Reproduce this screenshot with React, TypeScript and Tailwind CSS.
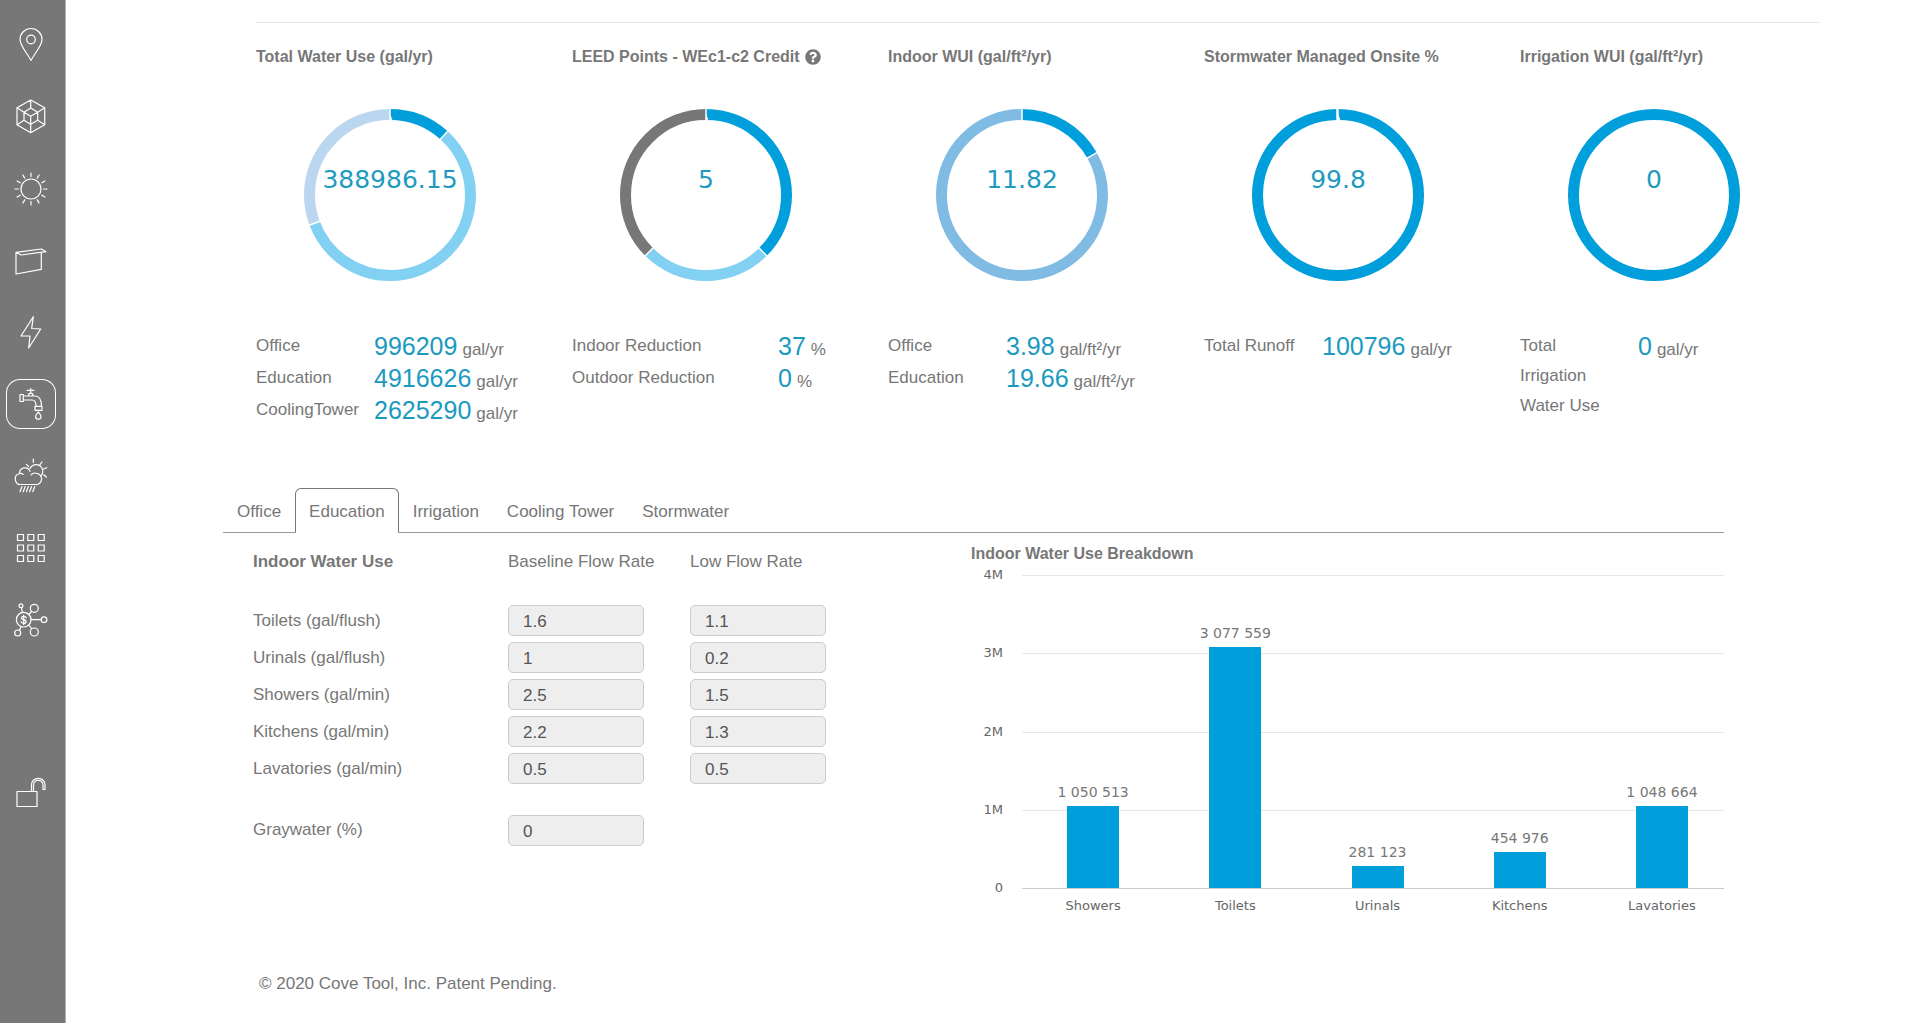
import React, { useState } from "react";
import { FaQuestionCircle } from "react-icons/fa";

type Segment = { share: number; color: string };
type Row = { label: string; value: string; unit: string };
type Metric = {
  title: string;
  help?: boolean;
  total: string;
  segments: Segment[];
  rows: Row[];
  wide?: boolean;
};

const metrics: Metric[] = [
  {
    title: "Total Water Use (gal/yr)",
    total: "388986.15",
    segments: [
      { share: 11.7, color: "#009fdb" },
      { share: 57.6, color: "#82d0f2" },
      { share: 30.7, color: "#bbd7ef" },
    ],
    rows: [
      { label: "Office", value: "996209", unit: "gal/yr" },
      { label: "Education", value: "4916626", unit: "gal/yr" },
      { label: "CoolingTower", value: "2625290", unit: "gal/yr" },
    ],
  },
  {
    title: "LEED Points - WEc1-c2 Credit",
    help: true,
    total: "5",
    wide: true,
    segments: [
      { share: 37.5, color: "#009fdb" },
      { share: 25, color: "#82d0f2" },
      { share: 37.5, color: "#777777" },
    ],
    rows: [
      { label: "Indoor Reduction", value: "37", unit: "%" },
      { label: "Outdoor Reduction", value: "0", unit: "%" },
    ],
  },
  {
    title: "Indoor WUI (gal/ft²/yr)",
    total: "11.82",
    segments: [
      { share: 16.8, color: "#009fdb" },
      { share: 83.2, color: "#80bbe4" },
    ],
    rows: [
      { label: "Office", value: "3.98", unit: "gal/ft²/yr" },
      { label: "Education", value: "19.66", unit: "gal/ft²/yr" },
    ],
  },
  {
    title: "Stormwater Managed Onsite %",
    total: "99.8",
    segments: [
      { share: 99.8, color: "#009fdb" },
      { share: 0.2, color: "#82d0f2" },
    ],
    rows: [{ label: "Total Runoff", value: "100796", unit: "gal/yr" }],
  },
  {
    title: "Irrigation WUI (gal/ft²/yr)",
    total: "0",
    segments: [{ share: 100, color: "#009fdb" }],
    rows: [{ label: "Total Irrigation Water Use", value: "0", unit: "gal/yr" }],
  },
];

const fixtures = [
  { name: "Toilets (gal/flush)", base: "1.6", low: "1.1" },
  { name: "Urinals (gal/flush)", base: "1", low: "0.2" },
  { name: "Showers (gal/min)", base: "2.5", low: "1.5" },
  { name: "Kitchens (gal/min)", base: "2.2", low: "1.3" },
  { name: "Lavatories (gal/min)", base: "0.5", low: "0.5" },
];

const bars = [
  { name: "Showers", value: 1050513, text: "1 050 513" },
  { name: "Toilets", value: 3077559, text: "3 077 559" },
  { name: "Urinals", value: 281123, text: "281 123" },
  { name: "Kitchens", value: 454976, text: "454 976" },
  { name: "Lavatories", value: 1048664, text: "1 048 664" },
];

const rays = Array.from({ length: 12 }, (_, i) => (i * Math.PI) / 6);

const icons: { name: string; art: React.ReactNode }[] = [
  {
    name: "Location",
    art: (
      <>
        <path d="M25 41.5C22.5 36 14 27 14 20.5a11 11 0 0 1 22 0C36 27 27.5 36 25 41.5z" />
        <circle cx="25" cy="20.5" r="4.3" />
      </>
    ),
  },
  {
    name: "Geometry",
    art: (
      <path d="M24.7 9l14 7.7v17l-14 8-13.7-8v-17zM24.7 17l7 4.300v8l-7 4-6.700-4v-8zM24.700 9v8M38.700 16.700l-7 4.600M38.700 33.700l-7-4.400M24.700 41.700V25.300M11 33.700l7-4.400M11 16.700l7 4.600 6.700 4 7-4" />
    ),
  },
  {
    name: "Daylight",
    art: (
      <>
        <circle cx="25" cy="26" r="10" />
        {rays.map((a) => (
          <line
            key={a}
            x1={25 + 12.5 * Math.cos(a)}
            y1={26 + 12.5 * Math.sin(a)}
            x2={25 + 16 * Math.cos(a)}
            y2={26 + 16 * Math.sin(a)}
          />
        ))}
      </>
    ),
  },
  {
    name: "Facade",
    art: <path d="M10 17.3L35.3 14l4.7 2.7L15 20zM10 17.3V39l25.3-4.7v-17" />,
  },
  {
    name: "Energy",
    art: <path d="M27.3 9.7L15 29h9l-1.3 12 12-19-9-.5z" />,
  },
  {
    name: "Water",
    art: (
      <>
        <path d="M14 15.5h3.3v7H14zM17.3 17H29c4 0 6.5 4 6.5 10.3M17.3 21h9c2.4 0 3.7 2.5 3.7 6.3M29 27.3h7v4h-7zM22.500 17c0-2 1-2.800 2.200-2.800s2.300.8 2.300 2.800M24.700 14.200V9.500M21 11.300h7" />
        <path d="M32.300 33c1.200 1.800 2.700 3 2.700 4.600a2.700 2.700 0 0 1-5.400 0c0-1.600 1.500-2.800 2.700-4.600z" />
      </>
    ),
  },
  {
    name: "Climate",
    art: (
      <>
        <path d="M15 33.500h14.500a5.500 5.500 0 0 0 1-11.200c-2-.6-4.200 0-5.500 1.500M15 33.500a5.500 5.500 0 0 1-2-10.700M13 22.800c1.500-.6 3-.3 4.200.6M13.500 22.600c0-7 8.600-7.300 10.500-2.200M24 17.500a6.700 6.700 0 1 1 11.300 7" />
        <path d="M27.300 8v3.500M36 11l-2.200 2.800M40.700 16.700l-3.200 1.300M40.300 26l-2.700-2.200M20.500 13.500l2.200 2.200M16 35.500l-2 5.200M19.200 35.500l-2 5.200M22.400 35.500l-2 5.200M25.600 35.500l-2 5.200M28.800 35.500l-2 5.200" />
      </>
    ),
  },
  {
    name: "Options",
    art: (
      <path d="M11.500 11.500h6v6h-6zM21.800 11.500h6v6h-6zM32.200 11.500h6v6h-6zM11.500 22h6v6h-6zM21.800 22h6v6h-6zM32.200 22h6v6h-6zM11.500 32.500h6v6h-6zM21.800 32.500h6v6h-6zM32.200 32.500h6v6h-6z" />
    ),
  },
  {
    name: "Cost",
    art: (
      <>
        <circle cx="17.7" cy="24.7" r="7.3" />
        <circle cx="15" cy="10.7" r="1.9" />
        <circle cx="28.3" cy="13.3" r="4" />
        <circle cx="38" cy="24.7" r="2.8" />
        <circle cx="28.3" cy="37" r="4" />
        <circle cx="11.7" cy="38" r="3" />
        <path d="M15.5 12.6l.8 4.8M22.8 19.5l2.7-3M25 24.7h10.2M22.8 30l2.7 3.5M13.5 35.5l1.5-3.8" />
        <path d="M20.3 22.8c-.4-1-1.3-1.5-2.5-1.5-3 0-3.2 3-.3 3.400 3.500.4 3.200 3.700.2 3.700-1.400 0-2.400-.6-2.700-1.700M17.700 20v9.500" />
      </>
    ),
  },
];

const lockArt = (
  <path d="M11 24.500h20v15H11zM25.500 24.500v-6.300c0-9.200 13.500-9.200 13.500 0v4.300h-2v-4.300c0-6.500-9.500-6.500-9.500 0v6.300" />
);

function SideButton({
  name,
  active,
  children,
}: {
  name: string;
  active?: boolean;
  children: React.ReactNode;
}) {
  return (
    <button
      type="button"
      aria-label={name}
      className={
        active
          ? "size-[50px] rounded-[14px] shadow-[inset_0_0_0_1px_#ffffff]"
          : "size-[50px] rounded-[14px]"
      }
    >
      <svg
        viewBox="0 0 50 50"
        className="size-[50px] fill-none stroke-white"
        strokeWidth="1.2"
        strokeLinejoin="round"
        strokeLinecap="round"
      >
        {children}
      </svg>
    </button>
  );
}

function Ring({ segments, total }: { segments: Segment[]; total: string }) {
  let start = 0;
  const parts = segments.map((s) => {
    const part = { ...s, start };
    start += s.share;
    return part;
  });
  return (
    <svg viewBox="-87 -87 174 174" className="mt-[39px] ml-[47px] size-[174px]">
      <g transform="rotate(-90)" fill="none" strokeWidth="11">
        {parts.map((p) => (
          <circle
            key={p.start}
            r="80.5"
            pathLength={100}
            stroke={p.color}
            strokeDasharray={p.share === 100 ? undefined : `${p.share} ${100 - p.share}`}
            strokeDashoffset={-p.start}
          />
        ))}
      </g>
      {parts.length > 1 &&
        parts.map((p) => (
          <line
            key={p.start}
            y1="-87"
            y2="-74"
            stroke="#ffffff"
            strokeWidth="1.5"
            transform={`rotate(${p.start * 3.6})`}
          />
        ))}
      <text
        y="-7"
        textAnchor="middle"
        className="fill-[#1f9ac0] font-['DejaVu_Sans',sans-serif] text-[25px]"
      >
        {total}
      </text>
    </svg>
  );
}

function MetricCard({ metric }: { metric: Metric }) {
  return (
    <section>
      <h2 className="flex items-center gap-[5px] text-base leading-6 font-bold whitespace-nowrap">
        {metric.title}
        {metric.help && <FaQuestionCircle className="size-4" aria-label="Help" />}
      </h2>
      <Ring segments={metric.segments} total={metric.total} />
      <dl className="mt-12">
        {metric.rows.map((r) => (
          <div key={r.label} className="flex min-h-8">
            <dt
              className={
                metric.wide
                  ? "-mb-px w-[206px] shrink-0 pt-px leading-[30px]"
                  : "-mb-px w-[118px] shrink-0 pt-px pr-[13px] leading-[30px]"
              }
            >
              {r.label}
            </dt>
            <dd className="flex h-8 items-baseline gap-[5px] leading-8 whitespace-nowrap">
              <span className="text-[25px] text-[#1a9abf]">{r.value}</span>
              <span>{r.unit}</span>
            </dd>
          </div>
        ))}
      </dl>
    </section>
  );
}

function RateInput({ label, value }: { label: string; value: string }) {
  return (
    <input
      type="text"
      aria-label={label}
      defaultValue={value}
      className="block h-[31px] w-[136px] rounded-[5px] border border-[#cccccc] bg-[#eeeeee] px-[14px] pt-0.5 text-[#555555]"
    />
  );
}

function FixtureTable() {
  return (
    <table className="mt-[14px] table-fixed">
      <colgroup>
        <col className="w-[255px]" />
        <col className="w-[182px]" />
        <col className="w-[182px]" />
      </colgroup>
      <thead>
        <tr className="h-[55px] text-left align-top leading-[30px]">
          <th scope="col" className="font-bold">
            Indoor Water Use
          </th>
          <th scope="col" className="font-normal">
            Baseline Flow Rate
          </th>
          <th scope="col" className="font-normal">
            Low Flow Rate
          </th>
        </tr>
      </thead>
      <tbody>
        {fixtures.map((f) => (
          <tr key={f.name} className="h-[37px]">
            <th scope="row" className="text-left font-normal">
              {f.name}
            </th>
            <td>
              <RateInput label={`${f.name} baseline flow rate`} value={f.base} />
            </td>
            <td>
              <RateInput label={`${f.name} low flow rate`} value={f.low} />
            </td>
          </tr>
        ))}
        <tr className="h-[62px] align-bottom">
          <th scope="row" className="pb-[7px] text-left font-normal">
            Graywater (%)
          </th>
          <td className="pb-[3px]">
            <RateInput label="Graywater (%)" value="0" />
          </td>
          <td />
        </tr>
      </tbody>
    </table>
  );
}

function BreakdownChart() {
  return (
    <section className="min-w-0 flex-1 pt-[9px]">
      <h3 className="text-base leading-6 font-bold">Indoor Water Use Breakdown</h3>
      <div className="mt-[9px] flex font-['DejaVu_Sans',sans-serif] text-[13px] text-[#666666]">
        <div className="-my-2.5 flex h-[333px] w-8 flex-col justify-between text-right leading-5">
          {["4M", "3M", "2M", "1M", "0"].map((t) => (
            <span key={t}>{t}</span>
          ))}
        </div>
        <div className="ml-[19px] min-w-0 flex-1">
          <div className="relative h-[314px]">
            <div className="absolute inset-0 flex flex-col justify-between">
              {[4, 3, 2, 1].map((n) => (
                <div key={n} className="h-px bg-[#e6e6e6]" />
              ))}
              <div className="h-px bg-[#cccccc]" />
            </div>
            <div className="relative -mr-[9px] flex h-[313px]">
              {bars.map((b) => (
                <div key={b.name} className="flex flex-1 flex-col items-center justify-end">
                  <span className="pb-1 text-sm leading-5 whitespace-nowrap text-[#777777]">
                    {b.text}
                  </span>
                  <div
                    className="w-[52px] shrink-0 bg-[#009fdb]"
                    style={{ height: `${b.value / 40000}%` }}
                  />
                </div>
              ))}
            </div>
          </div>
          <div className="mt-[7px] -mr-[9px] flex leading-5">
            {bars.map((b) => (
              <span key={b.name} className="flex-1 text-center">
                {b.name}
              </span>
            ))}
          </div>
        </div>
      </div>
    </section>
  );
}

const tabs = ["Office", "Education", "Irrigation", "Cooling Tower", "Stormwater"];

export default function App() {
  const [tab, setTab] = useState("Education");
  return (
    <div className="flex min-h-screen bg-white font-['Liberation_Sans',Arial,sans-serif] text-[17px] text-[#777777]">
      <nav
        aria-label="Main"
        className="flex w-[66px] shrink-0 flex-col gap-[22px] border-r border-[#b0b0b0] bg-[#777777] pt-[19px] pl-1.5"
      >
        {icons.map((i) => (
          <SideButton key={i.name} name={i.name} active={i.name === "Water"}>
            {i.art}
          </SideButton>
        ))}
        <div className="mt-[100px]">
          <SideButton name="Lock project">{lockArt}</SideButton>
        </div>
      </nav>

      <main className="min-w-0 flex-1">
        <div className="pr-[84px] pl-[190px]">
          <hr className="mt-[22px] mr-4 border-[#e8e8e8]" />
          <div className="mt-[22px] grid grid-cols-5">
            {metrics.map((m) => (
              <MetricCard key={m.title} metric={m} />
            ))}
          </div>
        </div>

        <div className="mt-[62px] mr-[196px] ml-[157px]">
          <div role="tablist" className="flex h-[45px] border-b border-[#999999]">
            {tabs.map((t) => (
              <button
                key={t}
                type="button"
                role="tab"
                aria-selected={t === tab}
                onClick={() => setTab(t)}
                className={
                  t === tab
                    ? "-mb-px rounded-t-md border border-[#777777] border-b-white bg-white px-[13px] pt-[3px]"
                    : "border border-transparent px-[13px] pt-1"
                }
              >
                {t}
              </button>
            ))}
          </div>
          <div className="flex">
            <div className="w-[748px] shrink-0 pl-[30px]">
              <FixtureTable />
            </div>
            <BreakdownChart />
          </div>
        </div>

        <footer className="mt-14 pl-[193px] leading-6">
          © 2020 Cove Tool, Inc. Patent Pending.
        </footer>
      </main>
    </div>
  );
}
